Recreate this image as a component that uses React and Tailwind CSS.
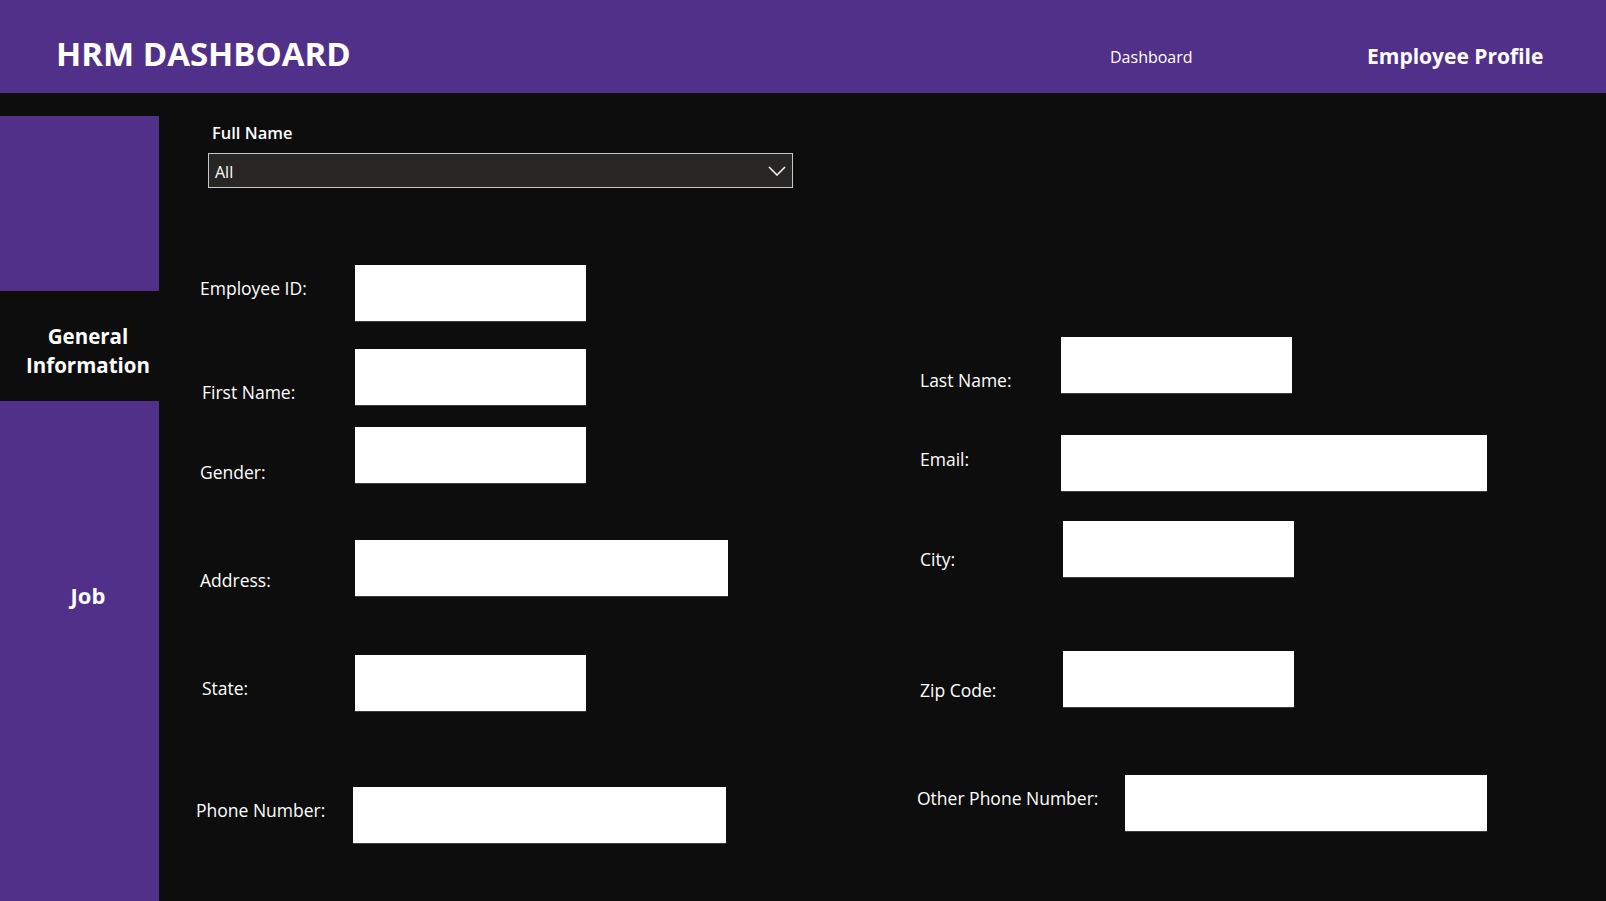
import React from "react";

const font = { fontFamily: '"Open Sans", "Noto Sans", sans-serif' };

function Box({ className }) {
  return <div className={"bg-white border-b border-[#3c3c3c] h-[57px] shrink-0 " + className} />;
}

export default function App() {
  return (
    <div className="w-[1606px] h-[901px] overflow-hidden bg-[#0d0d0d] text-white" style={font}>
      {/* Header */}
      <div className="h-[93px] bg-[#51308a] flex items-center pt-[14px]">
        <div className="w-[1110px] pl-[56px] mt-[1px]">
          <span className="text-[33px] font-bold leading-none">HRM DASHBOARD</span>
        </div>
        <div className="w-[257px] mt-[7px]">
          <span className="text-[16px] leading-none">Dashboard</span>
        </div>
        <div className="mt-[9px]">
          <span className="text-[21px] font-bold leading-none">Employee Profile</span>
        </div>
      </div>

      {/* Body */}
      <div className="flex h-[808px]">
        {/* Sidebar */}
        <div className="w-[159px] shrink-0 flex flex-col pt-[23px]">
          <div className="h-[175px] bg-[#51308a]" />
          <div className="h-[110px] pt-[31px] pl-[17px] text-center text-[20.5px] font-bold leading-[29px]">
            <div>General</div>
            <div>Information</div>
          </div>
          <div className="flex-1 bg-[#51308a] pt-[181px] pl-[17px] text-center text-[22px] font-bold leading-[26px]">
            Job
          </div>
        </div>

        {/* Main */}
        <div className="flex-1 flex flex-col">
          <div className="ml-[49px] pt-[30px]">
            <div className="pl-[4px] text-[16.5px] font-semibold leading-[20px]">Full Name</div>
            <div className="mt-[10px] w-[585px] h-[35px] bg-[#272625] border border-[#c8c8c8] flex items-center justify-between pl-[6px] pr-[6px] pt-[2px]">
              <span className="text-[16px] leading-none">All</span>
              <svg width="18" height="10" viewBox="0 0 18 10" className="mb-[1px]">
                <polyline points="1,1 9,9 17,1" fill="none" stroke="#ffffff" strokeWidth="1.5" />
              </svg>
            </div>
          </div>

          <div className="flex text-[17.5px] leading-[20px]">
            {/* Left column */}
            <div className="w-[758px] shrink-0 pl-[41px] flex flex-col">
              <div className="flex mt-[77px]">
                <div className="w-[155px] mt-[13px]">Employee ID:</div>
                <Box className="w-[231px]" />
              </div>
              <div className="flex mt-[27px]">
                <div className="w-[153px] ml-[2px] mt-[33px]">First Name:</div>
                <Box className="w-[231px]" />
              </div>
              <div className="flex mt-[21px]">
                <div className="w-[155px] mt-[35px]">Gender:</div>
                <Box className="w-[231px]" />
              </div>
              <div className="flex mt-[56px]">
                <div className="w-[155px] mt-[30px]">Address:</div>
                <Box className="w-[373px]" />
              </div>
              <div className="flex mt-[58px]">
                <div className="w-[153px] ml-[2px] mt-[23px]">State:</div>
                <Box className="w-[231px]" />
              </div>
              <div className="flex mt-[75px] -ml-[4px]">
                <div className="w-[157px] mt-[13px]">Phone Number:</div>
                <Box className="w-[373px]" />
              </div>
            </div>

            {/* Right column */}
            <div className="flex-1 flex flex-col">
              <div className="flex mt-[149px] pl-[3px]">
                <div className="w-[141px] mt-[33px]">Last Name:</div>
                <Box className="w-[231px]" />
              </div>
              <div className="flex mt-[41px] pl-[3px]">
                <div className="w-[141px] mt-[14px]">Email:</div>
                <Box className="w-[426px]" />
              </div>
              <div className="flex mt-[29px] pl-[3px]">
                <div className="w-[143px] mt-[28px]">City:</div>
                <Box className="w-[231px]" />
              </div>
              <div className="flex mt-[73px] pl-[3px]">
                <div className="w-[143px] mt-[29px]">Zip Code:</div>
                <Box className="w-[231px]" />
              </div>
              <div className="flex mt-[67px]">
                <div className="w-[208px] mt-[13px]">Other Phone Number:</div>
                <Box className="w-[362px]" />
              </div>
            </div>
          </div>
        </div>
      </div>
    </div>
  );
}
